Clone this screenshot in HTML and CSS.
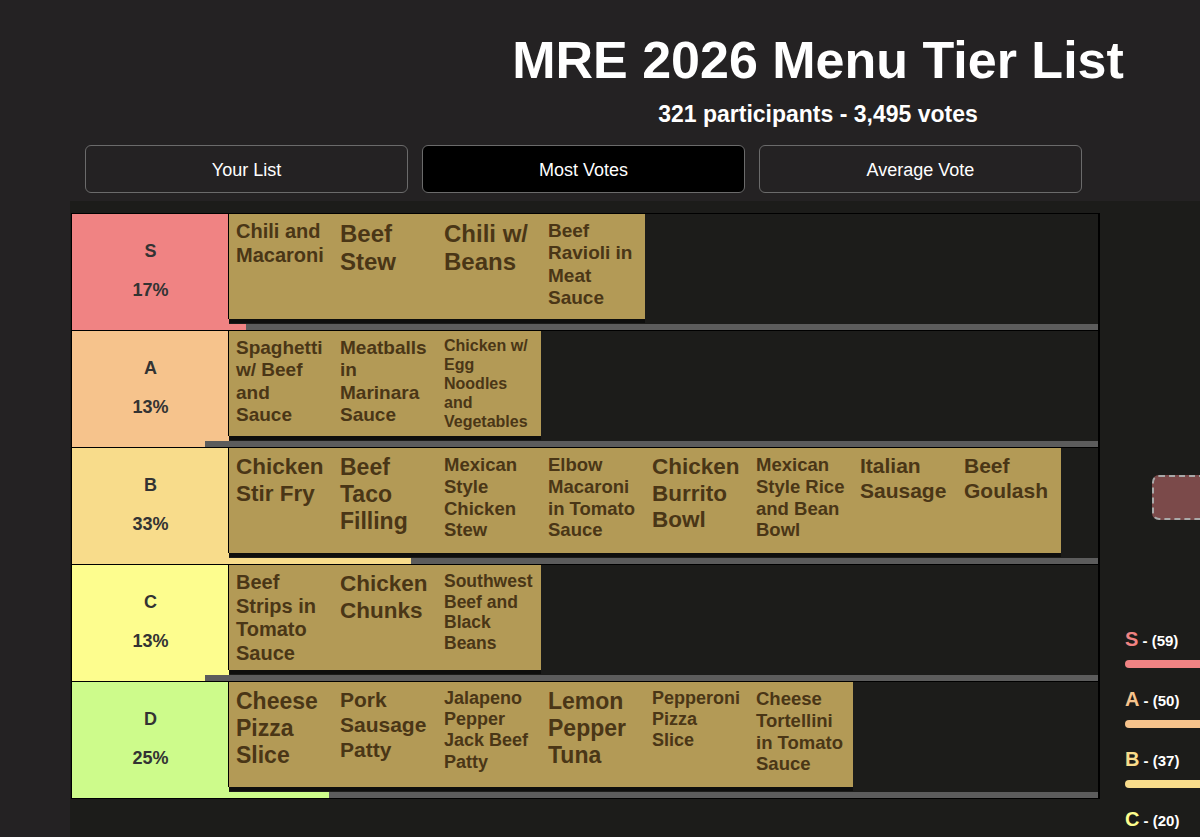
FILE: index.html
```html
<!DOCTYPE html>
<html lang="en">

<head>
    <meta charset="UTF-8">
    <meta name="viewport" content="width=device-width, initial-scale=1.0">
    <title>MRE 2026 Menu Tier List</title>
    <link rel="stylesheet" href="styles.css">
</head>

<body>
    <header>
        <h1>MRE 2026 Menu Tier List</h1>
        <p class="stats">321 participants - 3,495 votes</p>
    </header>

    <!-- View tabs -->
    <nav class="tabs">
        <button class="tab">Your List</button>
        <button class="tab active">Most Votes</button>
        <button class="tab">Average Vote</button>
    </nav>

    <div class="board">
        <!-- Tier rows -->
        <div class="tiers">
            <div class="tier tier-s">
                <div class="tier-main">
                    <div class="tier-label"><span>S</span><span>17%</span></div>
                    <div class="tier-items">
                        <div class="item fs-20">Chili and Macaroni</div>
                        <div class="item fs-24">Beef Stew</div>
                        <div class="item fs-24">Chili w/ Beans</div>
                        <div class="item fs-19">Beef Ravioli in Meat Sauce</div>
                    </div>
                </div>
                <div class="tier-bar"><div class="tier-fill" style="width: 17%"></div></div>
            </div>

            <div class="tier tier-a">
                <div class="tier-main">
                    <div class="tier-label"><span>A</span><span>13%</span></div>
                    <div class="tier-items">
                        <div class="item fs-19">Spaghetti w/ Beef and Sauce</div>
                        <div class="item fs-19">Meatballs in Marinara Sauce</div>
                        <div class="item fs-16">Chicken w/ Egg Noodles and Vegetables</div>
                    </div>
                </div>
                <div class="tier-bar"><div class="tier-fill" style="width: 13%"></div></div>
            </div>

            <div class="tier tier-b">
                <div class="tier-main">
                    <div class="tier-label"><span>B</span><span>33%</span></div>
                    <div class="tier-items">
                        <div class="item fs-22">Chicken Stir Fry</div>
                        <div class="item fs-23">Beef Taco Filling</div>
                        <div class="item fs-18h">Mexican Style Chicken Stew</div>
                        <div class="item fs-18h">Elbow Macaroni in Tomato Sauce</div>
                        <div class="item fs-22">Chicken Burrito Bowl</div>
                        <div class="item fs-18h">Mexican Style Rice and Bean Bowl</div>
                        <div class="item fs-21">Italian Sausage</div>
                        <div class="item fs-21">Beef Goulash</div>
                    </div>
                </div>
                <div class="tier-bar"><div class="tier-fill" style="width: 33%"></div></div>
            </div>

            <div class="tier tier-c">
                <div class="tier-main">
                    <div class="tier-label"><span>C</span><span>13%</span></div>
                    <div class="tier-items">
                        <div class="item fs-20">Beef Strips in Tomato Sauce</div>
                        <div class="item fs-22">Chicken Chunks</div>
                        <div class="item fs-17">Southwest Beef and Black Beans</div>
                    </div>
                </div>
                <div class="tier-bar"><div class="tier-fill" style="width: 13%"></div></div>
            </div>

            <div class="tier tier-d">
                <div class="tier-main">
                    <div class="tier-label"><span>D</span><span>25%</span></div>
                    <div class="tier-items">
                        <div class="item fs-23">Cheese Pizza Slice</div>
                        <div class="item fs-21">Pork Sausage Patty</div>
                        <div class="item fs-18">Jalapeno Pepper Jack Beef Patty</div>
                        <div class="item fs-23">Lemon Pepper Tuna</div>
                        <div class="item fs-18">Pepperoni Pizza Slice</div>
                        <div class="item fs-18h">Cheese Tortellini in Tomato Sauce</div>
                    </div>
                </div>
                <div class="tier-bar"><div class="tier-fill" style="width: 25%"></div></div>
            </div>
        </div>

        <!-- Drop zone and vote breakdown -->
        <aside class="side">
            <div class="dropzone"></div>
            <div class="legend">
                <div class="legend-item tier-s">
                    <div class="legend-line"><span class="legend-tier">S</span> - (59)</div>
                    <div class="legend-bar"></div>
                </div>
                <div class="legend-item tier-a">
                    <div class="legend-line"><span class="legend-tier">A</span> - (50)</div>
                    <div class="legend-bar"></div>
                </div>
                <div class="legend-item tier-b">
                    <div class="legend-line"><span class="legend-tier">B</span> - (37)</div>
                    <div class="legend-bar"></div>
                </div>
                <div class="legend-item tier-c">
                    <div class="legend-line"><span class="legend-tier">C</span> - (20)</div>
                    <div class="legend-bar"></div>
                </div>
            </div>
        </aside>
    </div>
</body>

</html>
```

FILE: styles.css
```css
/* Reset */
* {
    box-sizing: border-box;
    margin: 0;
    padding: 0;
}

body {
    font-family: "Liberation Sans", Arial, sans-serif;
    background-color: #242223;
    color: #fff;
    overflow-x: hidden;
}

header {
    padding: 30px 0 0 436px;
    text-align: center;
}

header h1 {
    font-size: 52px;
    line-height: 60px;
    font-weight: bold;
}

.stats {
    margin-top: 10px;
    font-size: 23px;
    line-height: 28px;
    font-weight: bold;
}

/* Tabs */
.tabs {
    display: flex;
    gap: 14px;
    margin: 17px 0 0 85px;
}

.tab {
    width: 323px;
    height: 48px;
    padding-top: 2px;
    border: 1px solid #6b6b6b;
    border-radius: 6px;
    background-color: #242223;
    color: #fff;
    font-family: inherit;
    font-size: 18px;
}

.tab.active {
    background-color: #000;
}

/* Board */
.board {
    display: flex;
    margin: 8px 0 0 70px;
    padding: 12px 0 0 1px;
    background-color: #1c1c1a;
    min-height: 640px;
}

.tiers {
    width: 1029px;
    flex: none;
    align-self: flex-start;
    border: 1px solid #000;
    border-right-width: 2px;
}

.tier + .tier {
    border-top: 1px solid #000;
}

.tier-s { --tier: #f08383; }
.tier-a { --tier: #f6c38c; }
.tier-b { --tier: #f8dc8b; }
.tier-c { --tier: #fdfd8e; }
.tier-d { --tier: #cdfb8b; }

.tier-main {
    display: flex;
    height: 110px;
}

.tier-label {
    width: 157px;
    flex: none;
    display: flex;
    flex-direction: column;
    align-items: center;
    gap: 17px;
    padding-top: 26px;
    background-color: var(--tier);
    color: #333;
    font-size: 18px;
    line-height: 22px;
    font-weight: bold;
}

.tier-items {
    display: flex;
    height: 105px;
    background-color: #b39a56;
    box-shadow: 0 4px 0 #0e0e0d, -1px 0 0 #000;
}

.item {
    width: 104px;
    padding: 6px 7px 0;
    color: #4a3616;
    font-weight: bold;
    line-height: 1.18;
}

.fs-16 { font-size: 16px; }
.fs-17 { font-size: 17.5px; }
.fs-18 { font-size: 18px; }
.fs-18h { font-size: 18.5px; }
.fs-19 { font-size: 19px; }
.fs-20 { font-size: 20px; }
.fs-21 { font-size: 21px; }
.fs-22 { font-size: 22.5px; }
.fs-23 { font-size: 23px; }
.fs-24 { font-size: 24px; }

.tier-bar {
    height: 6px;
    background-color: #5c5c5c;
}

.tier-fill {
    height: 100%;
    background-color: var(--tier);
}

/* Side panel */
.side {
    flex: 1;
    padding-left: 25px;
}

.dropzone {
    width: 90px;
    height: 45px;
    margin: 262px 0 0 27px;
    background-color: #7b4a4a;
    border: 2px dashed #a9a9a9;
    border-radius: 7px;
}

.legend {
    margin-top: 109px;
}

.legend-item {
    margin-bottom: 21px;
}

.legend-line {
    height: 22px;
    font-size: 15px;
    line-height: 22px;
    font-weight: bold;
}

.legend-tier {
    font-size: 20px;
    line-height: 1;
    color: var(--tier);
}

.legend-bar {
    width: 110px;
    height: 8px;
    margin-top: 9px;
    border-radius: 4px;
    background-color: var(--tier);
}
```
